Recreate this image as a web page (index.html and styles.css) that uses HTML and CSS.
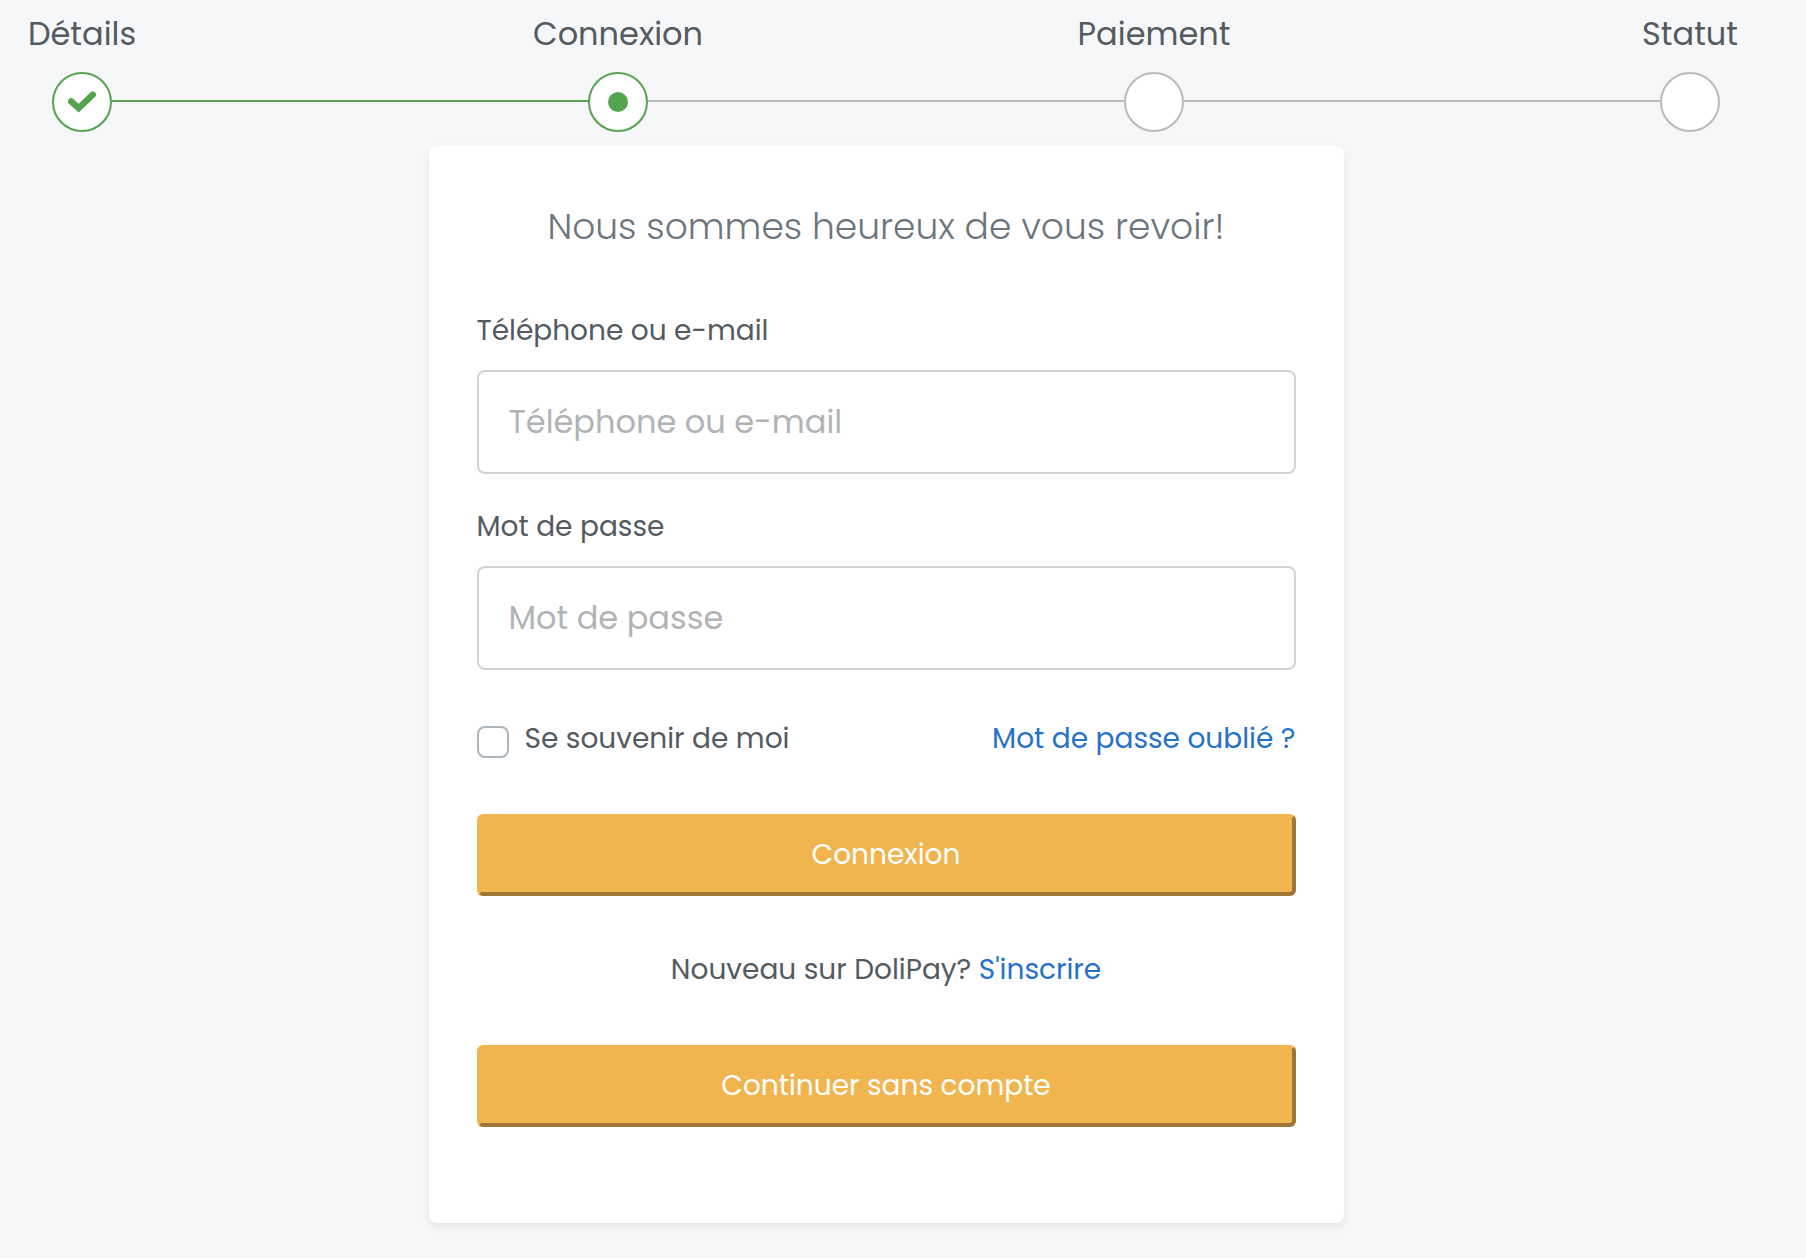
FILE: index.html
```html
<!DOCTYPE html>
<html lang="fr">
<head>
    <meta charset="UTF-8">
    <meta name="viewport" content="width=device-width, initial-scale=1.0">
    <title>DoliPay - Connexion</title>
    <link rel="stylesheet" href="styles.css">
</head>
<body>

    <!-- Payment steps -->
    <div class="steps">
        <div class="step done">
            <span class="step-name">Détails</span>
            <span class="step-dot">
                <svg class="check-icon" viewBox="0 0 28 22" aria-hidden="true">
                    <path d="M3.2 10.4 L10.6 17.2 L24.8 3.6" fill="none" stroke="currentColor" stroke-width="6.4" stroke-linecap="round" stroke-linejoin="miter"/>
                </svg>
            </span>
        </div>
        <div class="step-line done"></div>
        <div class="step active">
            <span class="step-name">Connexion</span>
            <span class="step-dot"><span class="bullet"></span></span>
        </div>
        <div class="step-line"></div>
        <div class="step">
            <span class="step-name">Paiement</span>
            <span class="step-dot"></span>
        </div>
        <div class="step-line"></div>
        <div class="step">
            <span class="step-name">Statut</span>
            <span class="step-dot"></span>
        </div>
    </div>

    <main class="login-card">
        <h1>Nous sommes heureux de vous revoir!</h1>
        <form id="loginForm">
            <div class="form-group">
                <label for="email">Téléphone ou e-mail</label>
                <input type="text" id="email" name="email" class="form-control" placeholder="Téléphone ou e-mail">
            </div>
            <div class="form-group">
                <label for="password">Mot de passe</label>
                <input type="password" id="password" name="password" class="form-control" placeholder="Mot de passe">
            </div>
            <div class="form-options">
                <div class="form-check">
                    <input type="checkbox" id="remember" name="remember">
                    <label for="remember">Se souvenir de moi</label>
                </div>
                <a href="#">Mot de passe oublié ?</a>
            </div>
            <button type="submit" class="btn">Connexion</button>
        </form>
        <p class="signup">Nouveau sur DoliPay? <a href="#">S'inscrire</a></p>
        <button type="button" class="btn">Continuer sans compte</button>
    </main>

</body>
</html>
```

FILE: styles.css
```css
* {
    box-sizing: border-box;
}

/* General Body Styles */
body {
    font-family: Poppins, Inter, sans-serif;
    font-size: 28px;
    line-height: 42px;
    background: #f6f7f9;
    color: #535b61;
    margin: 0;
    padding: 10px 34px 24px 0;
}

a {
    color: #2671c9;
    text-decoration: none;
}

/* Steps */
.steps {
    display: flex;
    margin-bottom: 14px;
}

.step {
    width: 164px;
    display: flex;
    flex-direction: column;
    align-items: center;
    gap: 14px;
}

.step-name {
    font-size: 32px;
    line-height: 48px;
}

.step-dot {
    width: 60px;
    height: 60px;
    display: flex;
    align-items: center;
    justify-content: center;
    background: #fff;
    border: 2px solid #b8babc;
    border-radius: 50%;
}

.step.done .step-dot,
.step.active .step-dot {
    border-color: #54a44f;
    color: #54a44f;
}

.check-icon {
    width: 28px;
    height: 22px;
}

.bullet {
    width: 20px;
    height: 20px;
    background: #54a44f;
    border-radius: 50%;
}

/* The line runs from one circle to the next, under the step names */
.step-line {
    flex: 1;
    height: 2px;
    margin: 90px -52px 0;
    background: #b8babc;
}

.step-line.done {
    background: #54a44f;
}

/* Login card */
.login-card {
    max-width: 915px;
    margin: 0 auto;
    padding: 54px 48px 96px;
    background: #fff;
    border-radius: 8px;
    box-shadow: 0 4px 8px rgba(0, 0, 0, 0.075);
}

h1 {
    margin: 0 0 56px;
    font-size: 36px;
    line-height: 54px;
    font-weight: 300;
    color: #6c757d;
    text-align: center;
}

/* Input Fields */
.form-group {
    margin-bottom: 32px;
}

.form-group label {
    display: block;
    margin-bottom: 18px;
}

.form-control {
    display: block;
    width: 100%;
    height: 104px;
    padding: 0 30px;
    border: 2px solid #d2d3d4;
    border-radius: 8px;
    background: #fff;
    font-family: inherit;
    font-size: 32px;
    color: #535b61;
}

.form-control::placeholder {
    color: #b1b4b6;
    opacity: 1;
}

/* Remember me and forgotten password */
.form-options {
    display: flex;
    justify-content: space-between;
    margin: 48px 0 54px;
}

.form-check {
    display: flex;
    gap: 16px;
}

.form-check input {
    appearance: none;
    width: 32px;
    height: 32px;
    margin: 8px 0 0;
    border: 2px solid #adb5bd;
    border-radius: 8px;
    background: #fff;
}

.form-check input:checked {
    background: #2671c9;
}

/* Buttons */
.btn {
    display: block;
    width: 100%;
    padding: 16px;
    border: 4px solid;
    border-color: #f0b54f #9f7733 #9f7733 #f0b54f;
    border-radius: 6px;
    background: #f0b54f;
    color: #fff;
    font-family: inherit;
    font-size: 28px;
    line-height: 42px;
    cursor: pointer;
}

.signup {
    margin: 53px 0 54px;
    text-align: center;
}
```
